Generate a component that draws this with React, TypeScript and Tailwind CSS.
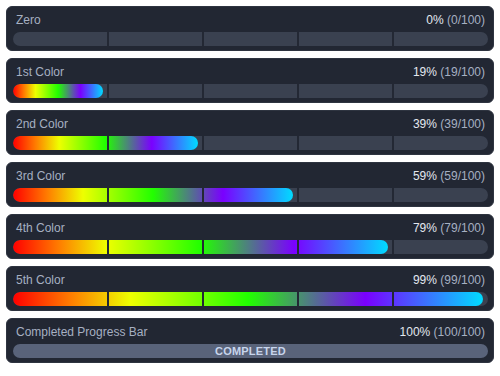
import React from 'react'

type Item = {
  label: string
  value: number
}

const items: Item[] = [
  { label: 'Zero', value: 0 },
  { label: '1st Color', value: 19 },
  { label: '2nd Color', value: 39 },
  { label: '3rd Color', value: 59 },
  { label: '4th Color', value: 79 },
  { label: '5th Color', value: 99 },
  { label: 'Completed Progress Bar', value: 100 },
]

export default function App() {
  return (
    <main
      className="min-h-screen bg-white px-[6px] pt-[6px]"
      style={{ fontFamily: '"Liberation Sans", Arial, sans-serif' }}
    >
      <div className="flex flex-col gap-[7px]">
        {items.map((item) => (
          <ProgressCard key={item.label} {...item} />
        ))}
      </div>
    </main>
  )
}

function ProgressCard({ label, value }: Item) {
  const done = value >= 100

  return (
    <section className="rounded-[6px] border border-[#2e3440] bg-[#222733] pl-[6px] pr-[5px] pt-[5px] pb-[4px]">
      <div className="flex h-4 items-center justify-between pl-[3px] pr-[3px] text-[12px] leading-4">
        <span className="text-[#a6b0c2]">{label}</span>
        <span>
          <span className="text-[#e3e8f0]">{value}%</span>{' '}
          <span className="text-[#a6b0c2]">({value}/100)</span>
        </span>
      </div>

      {done ? (
        <div className="mt-[4px] flex h-[14px] items-center justify-center rounded-full bg-[#59637a] text-[11px] font-bold tracking-[0.02em] text-[#c8d5ec]">
          COMPLETED
        </div>
      ) : (
        <div className="relative mt-[4px] h-[14px] overflow-hidden rounded-full bg-[#3a4150]">
          {value > 0 ? (
            <div
              className="h-full rounded-full bg-[linear-gradient(90deg,#ff0000_0%,#ff7a00_12%,#eeff00_25%,#22ff00_50%,#7a00ff_75%,#00dcff_100%)]"
              style={{ width: `${value}%` }}
            />
          ) : null}
          {[20, 40, 60, 80].map((pos) => (
            <div
              key={pos}
              className="absolute top-0 h-full w-[2px] bg-[#232834]"
              style={{ left: `calc(${pos}% - 1px)` }}
            />
          ))}
        </div>
      )}
    </section>
  )
}
